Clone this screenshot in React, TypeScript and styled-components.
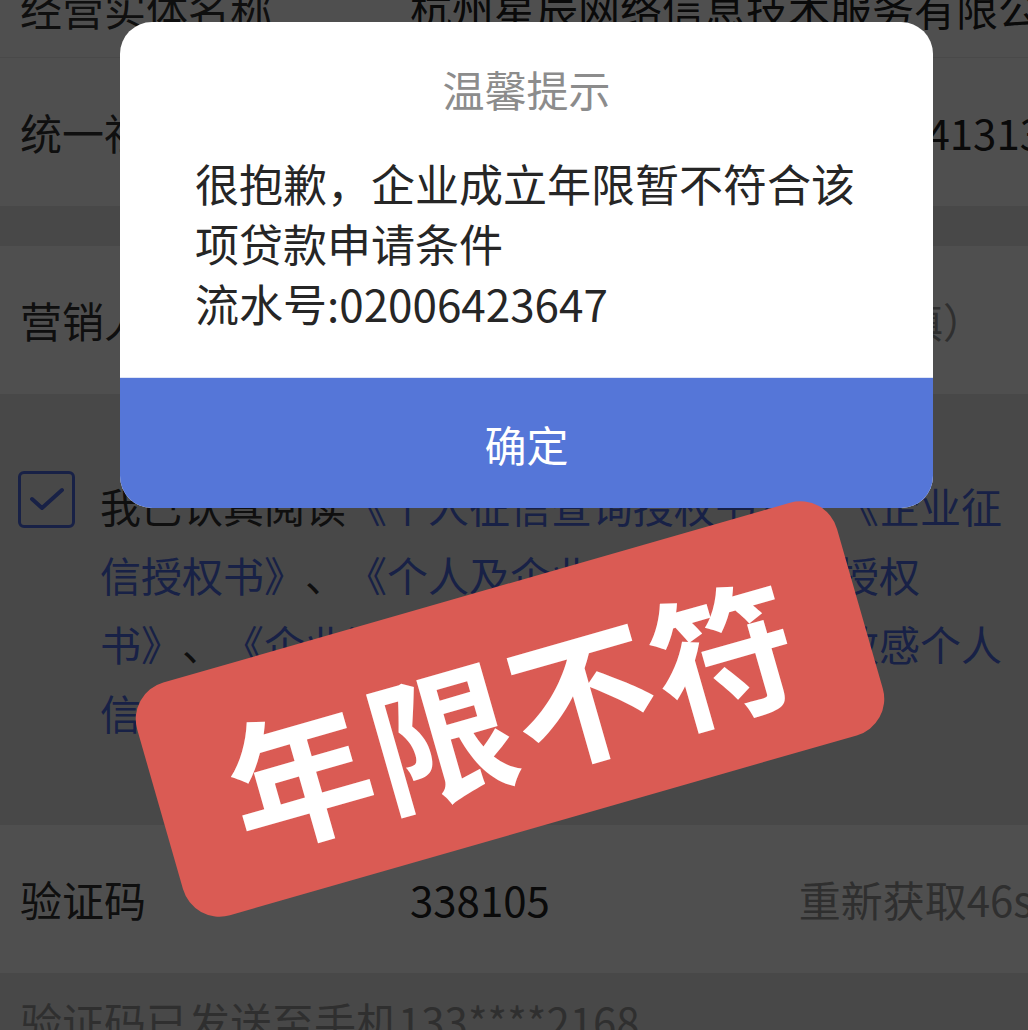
import styled, { createGlobalStyle } from 'styled-components';

// Page basics: no margin, no scrollbars, CJK font by name, full-width punctuation
const GlobalStyle = createGlobalStyle`
  html, body {
    margin: 0;
    padding: 0;
    overflow: hidden;
    background: #e8e8e8;
  }
  body {
    font-family: "Noto Sans CJK SC", "Noto Sans", sans-serif;
    text-spacing-trim: space-all;
  }
`;

// The phone screen is a little wider than the shot, so the right edge is cut
const Screen = styled.div`
  position: relative;
  width: 1053px;
  height: 1030px;
  overflow: hidden;
  background: #e8e8e8;
`;

// Form is scrolled a bit: first row is half out of view
const Page = styled.div`
  margin-top: -66px;
  display: flex;
  flex-direction: column;
`;

const Row = styled.div<{ $first?: boolean; $divider?: boolean; $gap?: boolean }>`
  display: flex;
  align-items: center;
  padding: ${p => (p.$first ? '44px 20px 19px' : '44px 20px')};
  margin-top: ${p => (p.$gap ? '40px' : '0')};
  border-top: ${p => (p.$divider ? '1px solid #ececec' : 'none')};
  background: #ffffff;
  font-size: 42px;
  line-height: 60px;
  white-space: nowrap;
`;

const Label = styled.div`
  width: 390px;
  flex-shrink: 0;
  color: #333333;
`;

const Value = styled.div<{ $muted?: boolean; $right?: boolean }>`
  flex: 1;
  color: ${p => (p.$muted ? '#999999' : '#222222')};
  font-size: ${p => (p.$muted ? '41px' : '42px')};
  text-align: ${p => (p.$right ? 'right' : 'left')};
  margin-right: ${p => (p.$right ? '-10px' : '0')};
`;

const Action = styled.div`
  color: #999999;
`;

const Agreement = styled.div`
  display: flex;
  align-items: flex-start;
  gap: 25px;
  padding: 77px 38px 78px 18px;
`;

const CheckBox = styled.div`
  width: 57px;
  height: 57px;
  flex-shrink: 0;
  box-sizing: border-box;
  border: 3px solid #4e6ae0;
  border-radius: 6px;
  display: flex;
  align-items: center;
  justify-content: center;
`;

const AgreementText = styled.p`
  flex: 1;
  margin: 0;
  font-size: 41px;
  line-height: 69px;
  color: #333333;
  text-spacing-trim: space-all;
`;

const Doc = styled.span`
  color: #4e6ae0;
`;

const Hint = styled.div`
  padding: 18px 20px;
  font-size: 42px;
  line-height: 60px;
  color: #999999;
  white-space: nowrap;
`;

// Dark mask over the form, the dialog sits on it
const Mask = styled.div`
  position: absolute;
  inset: 0;
  background: rgba(0, 0, 0, 0.69);
  display: flex;
  justify-content: center;
  align-items: flex-start;
  padding-top: 22px;
  box-sizing: border-box;
`;

const Dialog = styled.div`
  width: 813px;
  background: #ffffff;
  border-radius: 32px;
  overflow: hidden;
  display: flex;
  flex-direction: column;
`;

const DialogTitle = styled.div`
  padding-top: 37px;
  font-size: 42px;
  line-height: 60px;
  color: #8c8c8c;
  text-align: center;
`;

const DialogBody = styled.div`
  margin-top: 34px;
  padding: 0 75px 44px;
  font-size: 44px;
  line-height: 60px;
  color: #262626;
`;

const ConfirmButton = styled.button`
  height: 131px;
  border: none;
  border-top: 1px solid #dfe5f6;
  background: #5576d8;
  color: #ffffff;
  font-family: inherit;
  font-size: 42px;
  cursor: pointer;
`;

// Red label pasted on top of the shot
const Stamp = styled.div`
  position: absolute;
  left: 146px;
  top: 588px;
  width: 728px;
  height: 242px;
  transform: rotate(-16deg);
  background: #da5b54;
  border-radius: 38px;
  display: flex;
  align-items: center;
  justify-content: center;
  color: #ffffff;
  font-size: 144px;
  font-weight: 700;
  line-height: 1;
  letter-spacing: 3px;
  padding-left: 3px;
  box-sizing: border-box;
`;

const App = () => {
    return (
        <>
            <GlobalStyle />
            <Screen>
                <Page>
                    <Row $first>
                        <Label>经营实体名称</Label>
                        <Value>杭州星辰网络信息技术服务有限公司</Value>
                    </Row>
                    <Row $divider>
                        <Label>统一社会信用代码</Label>
                        <Value $right>91330100MA2C41313</Value>
                    </Row>
                    <Row $gap>
                        <Label>营销人员</Label>
                        <Value $muted>请输入营销人员推荐码（选填）</Value>
                    </Row>
                    <Agreement>
                        <CheckBox>
                            <svg width="40" height="30" viewBox="0 0 40 30" fill="none">
                                <path d="M5 14 L15 23 L35 5" stroke="#4e6ae0" strokeWidth="4" strokeLinecap="round" strokeLinejoin="round" />
                            </svg>
                        </CheckBox>
                        <AgreementText>
                            我已认真阅读<Doc>《个人征信查询授权书》</Doc>、<Doc>《企业征信授权书》</Doc>、<Doc>《个人及企业信息查询使用授权书》</Doc>、<Doc>《企业涉税信息查询授权书》</Doc>、<Doc>《敏感个人信息处理授权书》</Doc>
                        </AgreementText>
                    </Agreement>
                    <Row>
                        <Label>验证码</Label>
                        <Value>338105</Value>
                        <Action>重新获取46s</Action>
                    </Row>
                    <Hint>验证码已发送至手机133****2168</Hint>
                </Page>
                <Mask>
                    <Dialog>
                        <DialogTitle>温馨提示</DialogTitle>
                        <DialogBody>
                            很抱歉，企业成立年限暂不符合该项贷款申请条件
                            <br />
                            流水号:02006423647
                        </DialogBody>
                        <ConfirmButton>确定</ConfirmButton>
                    </Dialog>
                </Mask>
                <Stamp>年限不符</Stamp>
            </Screen>
        </>
    );
};

export default App;
